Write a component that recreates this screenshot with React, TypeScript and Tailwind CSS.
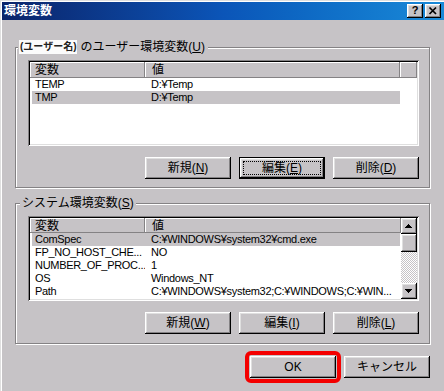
import React from "react";

const RAISED =
  "shadow-[inset_-1px_-1px_#000,inset_1px_1px_#fff,inset_-2px_-2px_#848284,inset_2px_2px_#dfdfdf]";

function U({ c }: { c: string }) {
  return <span className="underline underline-offset-[1px]">{c}</span>;
}

function Btn({
  children,
  def = false,
  focus = false,
}: {
  children: React.ReactNode;
  def?: boolean;
  focus?: boolean;
}) {
  return (
    <div
      className={
        "relative w-[86px] h-[22px] flex items-center justify-center text-[12px] leading-[14px] text-black bg-[#c6c3c6] " +
        (def
          ? "border border-black shadow-[inset_-1px_-1px_#000,inset_1px_1px_#fff,inset_-2px_-2px_#848284,inset_2px_2px_#dfdfdf]"
          : RAISED)
      }
    >
      {focus && <span className="absolute inset-[3px] border border-dotted border-black" />}
      <span>{children}</span>
    </div>
  );
}

function HeaderCell({ w, children }: { w: string; children?: React.ReactNode }) {
  return (
    <div
      className={
        w +
        " h-full flex items-center text-[12px] leading-[14px] shadow-[inset_-1px_-1px_#848284,inset_1px_1px_#fff]"
      }
    >
      {children}
    </div>
  );
}

function Row({ a, b, sel = false }: { a: string; b: string; sel?: boolean }) {
  return (
    <div
      className={
        "ml-[2px] w-[368px] h-[13px] shrink-0 flex text-[11px] leading-[13px] tracking-[-0.3px] whitespace-nowrap " +
        (sel ? "bg-[#c6c3c6]" : "")
      }
    >
      <div className="w-[113px] pl-[3px] overflow-hidden">{a}</div>
      <div className="flex-1 pl-[6px] overflow-hidden">{b}</div>
    </div>
  );
}

function Tri({ down = false }: { down?: boolean }) {
  return (
    <svg width="16" height="16" viewBox="0 0 16 16" shapeRendering="crispEdges">
      {down ? (
        <g fill="#000">
          <rect x="4" y="6" width="7" height="1" />
          <rect x="5" y="7" width="5" height="1" />
          <rect x="6" y="8" width="3" height="1" />
          <rect x="7" y="9" width="1" height="1" />
        </g>
      ) : (
        <g fill="#000">
          <rect x="7" y="6" width="1" height="1" />
          <rect x="6" y="7" width="3" height="1" />
          <rect x="5" y="8" width="5" height="1" />
          <rect x="4" y="9" width="7" height="1" />
        </g>
      )}
    </svg>
  );
}

export default function App() {
  return (
    <div className="w-[444px] h-[391px] overflow-hidden bg-[#c6c3c6] flex flex-col pt-[2px] shadow-[inset_1px_1px_#dfdfdf,inset_2px_2px_#fff] font-['Liberation_Sans','Noto_Sans_CJK_JP',sans-serif] text-black">
      {/* title bar */}
      <div className="ml-[2px] h-[18px] shrink-0 flex items-center justify-between pl-[2px] pr-[3px] bg-gradient-to-r from-[#0a246a] via-[#0b55b8] to-[#1a8ad8]">
        <span className="text-white text-[12px] leading-[14px] font-bold tracking-[0px]">環境変数</span>
        <div className="flex gap-[2px]">
          <div className={"w-[16px] h-[14px] bg-[#c6c3c6] flex items-center justify-center " + RAISED}>
            <span className="text-[11px] leading-[11px] font-bold -mt-[1px]">?</span>
          </div>
          <div className={"w-[16px] h-[14px] bg-[#c6c3c6] flex items-center justify-center " + RAISED}>
            <svg width="16" height="14" viewBox="0 0 16 14">
              <path d="M4.5 3.5 L11 10 M11 3.5 L4.5 10" stroke="#000" strokeWidth="1.7" />
            </svg>
          </div>
        </div>
      </div>

      {/* user group */}
      <div className="relative ml-[15px] mt-[27px] w-[415px] h-[141px] shrink-0 border border-[#848284] shadow-[inset_1px_1px_#fff,1px_1px_#fff] pl-[12px] pt-[12px] flex flex-col">
        <div className="absolute left-[2px] -top-[8px] h-[14px] flex items-center bg-[#c6c3c6] pl-[1px] pr-[3px] text-[12px] leading-[14px] whitespace-nowrap">
          <span className="bg-[#fbfbfb] h-[14px] px-[1px] text-[10px] leading-[14px] text-[#222] font-bold">(ユーザー名)</span>
          <span className="ml-[3px]">
            のユーザー環境変数(<U c="U" />)
          </span>
        </div>

        <div className="w-[391px] h-[86px] bg-white p-[2px] shadow-[inset_1px_1px_#848284,inset_-1px_-1px_#fff,inset_2px_2px_#000,inset_-2px_-2px_#dfdfdf]">
          <div className="w-full h-full flex flex-col overflow-hidden">
            <div className="h-[16px] shrink-0 flex bg-[#c6c3c6]">
              <HeaderCell w="w-[115px] pl-[5px]">変数</HeaderCell>
              <HeaderCell w="w-[255px] pl-[7px]">値</HeaderCell>
              <HeaderCell w="flex-1" />
            </div>
            <Row a="TEMP" b="D:¥Temp" />
            <Row a="TMP" b="D:¥Temp" sel />
          </div>
        </div>

        <div className="mt-[11px] w-[391px] flex justify-end gap-[8px]">
          <Btn>
            新規(<U c="N" />)
          </Btn>
          <Btn def focus>
            編集(<U c="E" />)
          </Btn>
          <Btn>
            削除(<U c="D" />)
          </Btn>
        </div>
      </div>

      {/* system group */}
      <div className="relative ml-[15px] mt-[15px] w-[415px] h-[141px] shrink-0 border border-[#848284] shadow-[inset_1px_1px_#fff,1px_1px_#fff] pl-[12px] pt-[12px] flex flex-col">
        <div className="absolute left-[4px] -top-[8px] h-[14px] flex items-center bg-[#c6c3c6] px-[2px] text-[12px] leading-[14px] whitespace-nowrap">
          システム環境変数(<U c="S" />)
        </div>

        <div className="w-[391px] h-[85px] bg-white p-[2px] shadow-[inset_1px_1px_#848284,inset_-1px_-1px_#fff,inset_2px_2px_#000,inset_-2px_-2px_#dfdfdf]">
          <div className="w-full h-full flex overflow-hidden">
            <div className="w-[371px] h-full flex flex-col overflow-hidden">
              <div className="h-[15px] shrink-0 flex bg-[#c6c3c6]">
                <HeaderCell w="w-[115px] pl-[5px]">変数</HeaderCell>
                <HeaderCell w="flex-1 pl-[7px]">値</HeaderCell>
              </div>
              <Row a="ComSpec" b="C:¥WINDOWS¥system32¥cmd.exe" sel />
              <Row a="FP_NO_HOST_CHE..." b="NO" />
              <Row a="NUMBER_OF_PROC..." b="1" />
              <Row a="OS" b="Windows_NT" />
              <Row a="Path" b="C:¥WINDOWS¥system32;C:¥WINDOWS;C:¥WIN..." />
              <Row a="PATHEXT" b=".COM;.EXE;.BAT;.CMD;.VBS;.VBE;.JS;.JSE;.WSF;.WSH" />
            </div>
            <div className="w-[16px] h-full flex flex-col">
              <div className={"h-[16px] shrink-0 bg-[#c6c3c6] " + RAISED}>
                <Tri />
              </div>
              <div className={"h-[18px] shrink-0 bg-[#c6c3c6] " + RAISED} />
              <div className="flex-1 bg-[image:repeating-conic-gradient(#c6c3c6_0_25%,#ffffff_0_50%)] bg-[length:2px_2px]" />
              <div className={"h-[16px] shrink-0 bg-[#c6c3c6] " + RAISED}>
                <Tri down />
              </div>
            </div>
          </div>
        </div>

        <div className="mt-[11px] w-[391px] flex justify-end gap-[8px]">
          <Btn>
            新規(<U c="W" />)
          </Btn>
          <Btn>
            編集(<U c="I" />)
          </Btn>
          <Btn>
            削除(<U c="L" />)
          </Btn>
        </div>
      </div>

      {/* OK / Cancel */}
      <div className="ml-[15px] mt-[12px] w-[415px] flex justify-end gap-[8px]">
        <div className="relative">
          <Btn>OK</Btn>
          <div className="absolute -inset-[5px] border-[4px] border-[#f40000] rounded-[6px]" />
        </div>
        <Btn>キャンセル</Btn>
      </div>
    </div>
  );
}
